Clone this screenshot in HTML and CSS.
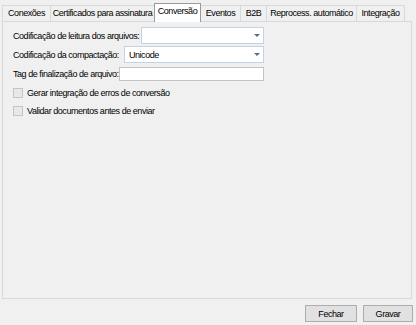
FILE: index.html
```html
<!DOCTYPE html>
<html lang="pt-BR">
<head>
    <meta charset="UTF-8">
    <title>Configurações</title>
    <link rel="stylesheet" href="styles.css">
</head>
<body>
    <div class="window">
        <div class="tabs">
            <div class="tab tab-conexoes">Conexões</div>
            <div class="tab tab-cert">Certificados para assinatura</div>
            <div class="tab tab-conv active">Conversão</div>
            <div class="tab tab-eventos">Eventos</div>
            <div class="tab tab-b2b">B2B</div>
            <div class="tab tab-reproc">Reprocess. automático</div>
            <div class="tab tab-integ">Integração</div>
        </div>

        <div class="panel">
            <div class="row row-first">
                <span class="label">Codificação de leitura dos arquivos:</span>
                <div class="combo gap-s"><span class="combo-text"></span><span class="arrow"></span></div>
            </div>
            <div class="row">
                <span class="label">Codificação da compactação:</span>
                <div class="combo gap-l"><span class="combo-text">Unicode</span><span class="arrow"></span></div>
            </div>
            <div class="row row-text">
                <span class="label">Tag de finalização de arquivo:</span>
                <div class="textbox"></div>
            </div>
            <label class="check check-first"><span class="box"></span>Gerar integração de erros de conversão</label>
            <label class="check"><span class="box"></span>Validar documentos antes de enviar</label>
        </div>

        <div class="buttons">
            <button class="btn btn-close">Fechar</button>
            <button class="btn btn-save">Gravar</button>
        </div>
    </div>
</body>
</html>
```

FILE: styles.css
```css
* {
    margin: 0;
    padding: 0;
    box-sizing: border-box;
}

body {
    background: #f0f0f0;
    font-family: 'Liberation Sans', Arial, sans-serif;
    font-size: 9px;
    letter-spacing: -0.45px;
    color: #000000;
}

.window {
    width: 416px;
    height: 325px;
    padding: 2px 3px 0 2px;
    display: flex;
    flex-direction: column;
}

.tabs {
    display: flex;
    align-items: flex-end;
    height: 19px;
    position: relative;
    z-index: 1;
}

.tab {
    height: 16px;
    line-height: 14px;
    text-align: center;
    border: 1px solid #d9d9d9;
    border-bottom: none;
    margin-right: -1px;
    background: #f0f0f0;
    white-space: nowrap;
}

.tab.active {
    height: 19px;
    line-height: 14px;
    background: #ffffff;
    border-color: #9b9b9b;
    margin-bottom: -1px;
    position: relative;
    z-index: 2;
}

.tab-conexoes { width: 49px; }
.tab-cert { width: 105px; }
.tab-conv { width: 47px; }
.tab-eventos { width: 41px; }
.tab-b2b { width: 27px; }
.tab-reproc { width: 91px; }
.tab-integ { width: 49px; }

.panel {
    width: 410px;
    height: 278px;
    border: 1px solid #d9d9d9;
    background: #f0f0f0;
    padding: 5px 0 0 10px;
}

.row {
    display: flex;
    align-items: center;
    width: 251px;
    height: 17px;
    margin-top: 2px;
}

.row-first {
    margin-top: 0;
}

.row-text {
    height: 14px;
    margin-top: 4px;
}

.label {
    white-space: nowrap;
}

.combo {
    flex: 1;
    height: 17px;
    background: #ffffff;
    border: 1px solid #c3d3e6;
    display: flex;
    align-items: center;
    justify-content: space-between;
    padding: 0 3px 0 4px;
}

.gap-s {
    margin-left: 2px;
}

.gap-l {
    margin-left: 5px;
}

.arrow {
    width: 0;
    height: 0;
    border-left: 3px solid transparent;
    border-right: 3px solid transparent;
    border-top: 3px solid #4d6f9b;
}

.textbox {
    flex: 1;
    height: 14px;
    background: #ffffff;
    border: 1px solid #c3c3c3;
}

.check {
    display: flex;
    align-items: center;
    height: 10px;
    margin-top: 8px;
    white-space: nowrap;
}

.check-first {
    margin-top: 7px;
}

.box {
    width: 10px;
    height: 10px;
    border: 1px solid #c4c4c4;
    background: #e8e8e8;
    margin-right: 4px;
}

.buttons {
    display: flex;
    justify-content: flex-end;
    gap: 6px;
    margin-top: 6px;
}

.btn {
    height: 17px;
    background: #e1e1e1;
    border: 1px solid #adadad;
    font-family: 'Liberation Sans', Arial, sans-serif;
    font-size: 9px;
    letter-spacing: -0.45px;
    color: #000000;
}

.btn-close {
    width: 52px;
}

.btn-save {
    width: 50px;
}
```
